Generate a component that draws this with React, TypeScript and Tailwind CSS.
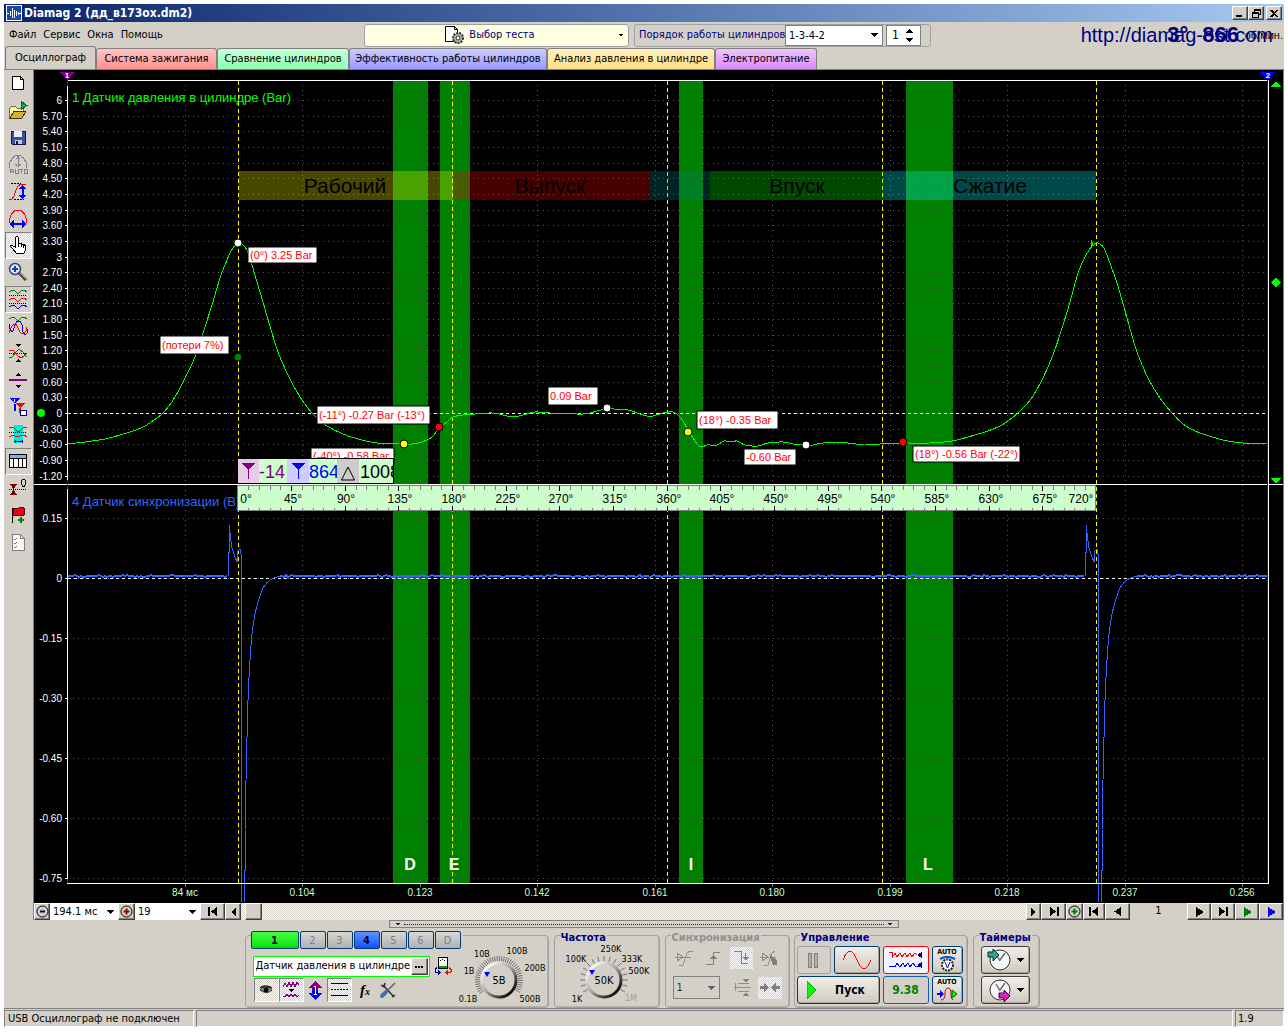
import React from "react";

const ui = "font-['DejaVu_Sans_Condensed','DejaVu_Sans',sans-serif]";
const raised =
  "border border-t-white border-l-white border-r-[#404040] border-b-[#404040] shadow-[inset_-1px_-1px_0_#808080] bg-[#d4d0c8]";
const sunken = "border border-t-[#808080] border-l-[#808080] border-r-white border-b-white";
const dither = "bg-[repeating-conic-gradient(#ffffff_0_25%,#d4d0c8_0_50%)] bg-[length:2px_2px]";

/* ---------- icons ---------- */

function Ico({ children, w = 20, h = 20, smooth = false }: { children: React.ReactNode; w?: number; h?: number; smooth?: boolean }) {
  return (
    <svg width={w} height={h} viewBox={`0 0 ${w} ${h}`} fill="none" shapeRendering={smooth ? "auto" : "crispEdges"} aria-hidden="true" className="shrink-0">
      {children}
    </svg>
  );
}

const wave = (y: number) => `M1 ${y} l2 -1 l2 -1 l2 1 l2 2 l2 0 l3 -3 l2 0 l3 2`;

const toolIcons: { name: string; pressed?: boolean; dither?: boolean; icon: React.ReactNode }[] = [
  {
    name: "Новый",
    icon: (
      <Ico>
        <path d="M4.5 3.5h8l3 3v10h-11z" fill="#fff" stroke="#000" />
        <path d="M12.5 3.5v3h3" stroke="#000" />
      </Ico>
    ),
  },
  {
    name: "Открыть",
    icon: (
      <Ico>
        <path d="M1.5 17.5v-9l2-2h4l2 2h6v2" fill="#fbf3b0" stroke="#806a20" />
        <path d="M2 18l4-7h12l-4 7z" fill="#d6b030" stroke="#403000" />
        <path d="M13 1v9l6-4.500z" fill="#00b050" stroke="#006030" />
      </Ico>
    ),
  },
  {
    name: "Сохранить",
    icon: (
      <Ico>
        <path d="M3 4h14v13H4l-1-1z" fill="#3c50a0" stroke="#101840" />
        <path d="M6 4h8v6H6z" fill="#e8f0ff" />
        <path d="M7 13h7v4H7z" fill="#c0c8d8" />
        <path d="M8 14h2v3H8z" fill="#101840" />
      </Ico>
    ),
  },
  {
    name: "Автомасштаб",
    icon: (
      <Ico>
        <path d="M1.500 14v-5l3-5l3-2.500h5l3 2.500l3 5v5" stroke="#808080" />
        <path d="M10 3v9M7.500 5.500l2.500-3l2.500 3M7.500 10l2.500 3l2.500-3" stroke="#808080" />
        <path d="M2 19v-3l1-1h1l1 1v3M2 17.500h3M7 15v4h3v-4M11 15.500h4M13 15v4M16 15h3v4h-3z" stroke="#808080" />
      </Ico>
    ),
  },
  {
    name: "Масштаб по вертикали",
    icon: (
      <Ico>
        <path d="M3 2.500h10M6 18.500h10" stroke="#000" strokeDasharray="2 1" />
        <path d="M1 18h3l2-3l2-6l2-4l3-2h5" stroke="#f00" />
        <path d="M14.500 5v12" stroke="#00f" strokeWidth="2" />
        <path d="M11 8l3.500-4l3.500 4zM11 14l3.500 4l3.500-4z" fill="#00f" />
      </Ico>
    ),
  },
  {
    name: "Масштаб по горизонтали",
    icon: (
      <Ico>
        <path d="M1.500 15v-4l2-5l4-4h5l4 4l2 5v4" stroke="#f00" />
        <path d="M3 16h14" stroke="#00f" strokeWidth="2" />
        <path d="M6 12v8l-5-4zM14 12v8l5-4z" fill="#00f" />
      </Ico>
    ),
  },
  {
    name: "Рука",
    pressed: true,
    dither: true,
    icon: (
      <Ico>
        <path d="M7.500 12.500v-10l1-1h1l1 1v6l2 0l2 1l2 0l1 2v4l-2 3h-7l-4-5l-2-2v-1h2z" fill="#fff" stroke="#000" />
        <path d="M10.500 8v4M13 9v3M15.500 10v3" stroke="#000" />
      </Ico>
    ),
  },
  {
    name: "Лупа",
    icon: (
      <Ico smooth>
        <path d="M11 11l7 7" stroke="#504030" strokeWidth="3" />
        <path d="M12 11l6 6" stroke="#e0a860" strokeWidth="1" />
        <circle cx="7" cy="7" r="5.500" fill="#d8ecff" stroke="#304878" strokeWidth="1.500" />
        <path d="M7 4v6M4 7h6" stroke="#1840a0" strokeWidth="2" />
      </Ico>
    ),
  },
  {
    name: "Раздельные графики",
    pressed: true,
    icon: (
      <Ico>
        <path d={wave(3)} stroke="#008000" />
        <path d={wave(11)} stroke="#f00" />
        <path d={wave(18)} stroke="#00f" />
        <path d="M1 6.500h18M1 14.500h18" stroke="#000" strokeDasharray="1 1" />
      </Ico>
    ),
  },
  {
    name: "Совмещённые графики",
    icon: (
      <Ico>
        <path d={wave(3)} stroke="#008000" />
        <path d="M1 17q5-15 9-5t8 3l1-4" stroke="#f00" />
        <path d="M1 8l1 5l2 3l1-1l2-6l2-4h3l2 4l1 7l2 3l2-2l1-4" stroke="#00f" />
      </Ico>
    ),
  },
  {
    name: "Наложить",
    icon: (
      <Ico>
        <path d="M1 10.500h18" stroke="#000" strokeDasharray="1 1" />
        <path d="M1 7l4 0l5 6l3 2l3-2l3-3" stroke="#f00" />
        <path d="M1 14l3 0l4-5l3-3l4 3l4 5" stroke="#008000" />
        <path d="M7 1h6l-3 3zM7 19h6l-3-3z" fill="#000" />
      </Ico>
    ),
  },
  {
    name: "Растянуть",
    icon: (
      <Ico>
        <path d="M1 10h18" stroke="#800080" strokeWidth="2" />
        <path d="M7 6h6l-3-3zM7 15h6l-3 3z" fill="#000" />
      </Ico>
    ),
  },
  {
    name: "Маркеры",
    icon: (
      <Ico>
        <path d="M1 1h11l-5 6zM6 7h2v7H6z" fill="#00f" />
        <path d="M8 6h9l-5 5zM11 11h2v5h-2z" fill="#f00" />
        <path d="M6 2v3" stroke="#fff" />
        <path d="M12.500 13.500h6v5h-6z" fill="#fff" stroke="#000080" />
      </Ico>
    ),
  },
  {
    name: "Интервал",
    icon: (
      <Ico>
        <path d="M6 1h9v18H6z" fill="#00e8e8" />
        <path d="M1 4l4-1l4 4l3 0l4-4l3 1" stroke="#008000" />
        <path d="M1 13l4-2l4 2l3-1l4-1l3 2" stroke="#f00" />
        <path d="M1 8.500h18" stroke="#000" strokeDasharray="1 1" />
        <path d="M6 17.500h9M7 16v3M14 16v3" stroke="#000080" />
      </Ico>
    ),
  },
  {
    name: "Таблица",
    pressed: true,
    icon: (
      <Ico>
        <path d="M1.500 3.500h17v13h-17z" fill="#fff" stroke="#000" />
        <path d="M2 4h16v3H2z" fill="#80b0e8" />
        <path d="M2 7.500h16M5.500 7v9M10 7v9M14.500 7v9" stroke="#000" />
      </Ico>
    ),
  },
  {
    name: "Обнулить",
    icon: (
      <Ico>
        <path d="M1 11.500h18" stroke="#000" strokeDasharray="1 1" />
        <path d="M2 6h7l-3.500 5zM2 17h7l-3.500-5z" fill="#800000" />
        <path d="M13.500 3l1-2h2l1 2v3l-1 2h-2l-1-2z" stroke="#000" />
      </Ico>
    ),
  },
  {
    name: "Добавить метку",
    icon: (
      <Ico>
        <path d="M4 3v15" stroke="#000" strokeWidth="1" />
        <path d="M5 3l4 1l4-2l3 1v7l-4 1l-3-1l-4 1z" fill="#f00018" stroke="#600" />
        <path d="M13 12v6M10 15h6" stroke="#008000" strokeWidth="2" />
      </Ico>
    ),
  },
  {
    name: "Отчёт",
    icon: (
      <Ico>
        <path d="M4.500 2.500h8l4 4v12h-12z" fill="#f8f8f8" stroke="#808080" />
        <path d="M6 7l1 1l2-2M6 11l1 1l2-2M6 15l1 1l2-2M12.500 2.500v4h4" stroke="#808080" />
      </Ico>
    ),
  },
];

const nav = {
  first: (
    <Ico w={12} h={9}>
      <path d="M1 0h2v9H1zM10 0v9L4 4.500z" fill="#000" />
    </Ico>
  ),
  last: (
    <Ico w={12} h={9}>
      <path d="M9 0h2v9H9zM2 0v9l6-4.500z" fill="#000" />
    </Ico>
  ),
  left: (
    <Ico w={8} h={9}>
      <path d="M7 0v9L0 4.500z" fill="#000" />
    </Ico>
  ),
};
const play = (c: string) => (
  <Ico w={9} h={10}>
    <path d="M1 0v10l8-5z" fill={c} />
  </Ico>
);
const Down = ({ c = "#000", w = 7 }: { c?: string; w?: number }) => (
  <svg width={w} height="4" viewBox="0 0 8 4" shapeRendering="crispEdges" aria-hidden="true">
    <path d="M0 0h8l-4 4z" fill={c} />
  </svg>
);

/* ---------- oscilloscope chart ---------- */

const pressure =
  "67,444 85,442 105,439 120,435 133,431 145,426 154,420 162,414 169,406 175,397 180,388 185,378 190,368 195,357 203,333 212,305 220,278 225,265 230,253 235,245 238,243 242,244 247,250 252,265 257,282 263,302 269,323 278,352 287,373 297,392 307,407 317,418 327,426 343,434 358,439 377,443 404,444 412,444 422,442 432,437 439,428 447,422 453,417 463,415 475,414 492,413 503,415 512,417 523,415 535,412 550,413 583,414 597,411 607,409 628,410 637,413 647,416 653,416 663,413 673,412 680,417 687,428 693,438 698,445 702,447 707,445 717,445 724,441 732,442 737,441 745,445 758,446 768,443 783,442 793,444 806,445 813,445 823,443 848,443 863,445 880,444 900,443 930,443 952,441 968,437 988,431 1000,426 1008,421 1018,413 1026,405 1033,396 1043,378 1053,355 1062,328 1070,302 1078,273 1085,257 1091,247";
const pressureTail =
  "1093,246 1096,243 1100,244 1104,248 1108,258 1117,283 1127,318 1137,352 1148,378 1160,398 1172,413 1183,424 1191,429 1200,433 1223,440 1243,443 1267,444";

/* Catmull-Rom spline through the sampled points. */
function spline(src: string) {
  const p = src.split(" ").map((s) => s.split(",").map(Number));
  let d = `M${p[0][0]} ${p[0][1]}`;
  for (let i = 0; i < p.length - 1; i++) {
    const a = p[Math.max(0, i - 1)];
    const b = p[i];
    const c = p[i + 1];
    const e = p[Math.min(p.length - 1, i + 2)];
    d += `C${b[0] + (c[0] - a[0]) / 6} ${b[1] + (c[1] - a[1]) / 6} ${c[0] - (e[0] - b[0]) / 6} ${c[1] - (e[1] - b[1]) / 6} ${c[0]} ${c[1]}`;
  }
  return d;
}

function baseline(from: number, to: number) {
  const pts: string[] = [];
  let s = from * 7 + 3;
  for (let x = from; x <= to; x += 2) {
    s = (s * 1103515245 + 12345) % 2147483648;
    const r = s / 2147483648;
    pts.push(`${x},${r > 0.9 ? 575 : r < 0.15 ? 577 : 576}`);
  }
  return pts.join(" ");
}
const pulse = (o: number) =>
  `${o - 10},576 ${o - 10},552 ${o - 9},552 ${o - 9},525 ${o - 8},533 ${o - 6},548 ${o - 3},557 ${o - 1},562 ${o},551 ${o + 2},549 ${o + 3},554 ${o + 3},902`;
const recoveryStem = (o: number) => `${o + 6},902 ${o + 6},870 ${o + 7},870 ${o + 7},830`;
const recoveryCurve = (o: number) =>
  `${o + 7},830 ${o + 8},780 ${o + 10},700 ${o + 12},660 ${o + 14},634 ${o + 17},614 ${o + 21},599 ${o + 25},588 ${o + 32},580 ${o + 42},576`;

const greenBands = [
  [393, 35],
  [440, 30],
  [679, 24],
  [906, 47],
];
const phases: [number, number, string, string, number][] = [
  [239, 214, "#ffff00", "Рабочий", 345],
  [453, 196, "#ff0000", "Выпуск", 550],
  [649, 61, "#008080", "", 0],
  [710, 173, "#00ff00", "Впуск", 797],
  [883, 213, "#00ffff", "Сжатие", 990],
];
const labels: [number, number, number, number, string][] = [
  [248, 247, 69, 16, "(0°) 3.25 Bar"],
  [160, 336, 69, 18, "(потери 7%)"],
  [317, 406, 113, 18, "(-11°) -0.27 Bar (-13°)"],
  [311, 448, 83, 16, "(-40°) -0.58 Bar"],
  [548, 387, 50, 18, "0.09 Bar"],
  [697, 411, 81, 18, "(18°) -0.35 Bar"],
  [744, 449, 52, 16, "-0.60 Bar"],
  [913, 446, 107, 16, "(18°) -0.56 Bar (-22°)"],
];
const dots: [number, number, string][] = [
  [238, 243, "#fff"],
  [238, 357, "#008000"],
  [439, 427, "#f00"],
  [404, 444, "#ff0"],
  [607, 408, "#fff"],
  [688, 432, "#ff0"],
  [806, 445, "#fff"],
  [903, 442, "#f00"],
];
const topRows = Array.from({ length: 25 }, (_, i) => ({ v: (60 - i * 3) / 10, y: Math.round(100 + i * 15.65) }));
const bottomRows = Array.from({ length: 7 }, (_, i) => ({ v: (15 - i * 15) / 100, y: 518 + i * 60 }));
const columns = ["84 мс", "0.104", "0.123", "0.142", "0.161", "0.180", "0.199", "0.218", "0.237", "0.256"].map((t, i) => ({
  t,
  x: Math.floor(185 + i * 117.55),
}));
const yellowLines = [238, 452, 667, 882, 1096];

function Chart() {
  return (
    <svg viewBox="34 70 1249 833" className="block h-auto w-full bg-black font-['Liberation_Sans',Arial,sans-serif]" role="img" aria-label="Осциллограмма">
      <g shapeRendering="crispEdges">
        {greenBands.map(([x, w]) => (
          <rect key={x} x={x} y={81} width={w} height={802} fill="#008000" />
        ))}
        {topRows.concat(bottomRows).map((r) => (
          <line key={r.y} x1={73} x2={1267} y1={r.y + 0.5} y2={r.y + 0.5} stroke="#585858" strokeDasharray="1 4" />
        ))}
        {columns.map((c) => (
          <line key={c.x} x1={c.x + 0.5} x2={c.x + 0.5} y1={85} y2={883} stroke="#585858" strokeDasharray="1 4" />
        ))}
        <path d="M68 413.500H1267M68 578.500H1267" stroke="#fff" strokeDasharray="3 3" />
        {yellowLines.map((x) => (
          <line key={x} x1={x + 0.5} x2={x + 0.5} y1={81} y2={883} stroke="#ff0" strokeDasharray="4 3" />
        ))}
        {phases.map(([x, w, c]) => (
          <rect key={x} x={x} y={171} width={w} height={29} fill={c} opacity={0.28} />
        ))}
        <g fill="none" stroke="#0f0">
          <path d={spline(pressure)} />
          <path d="M1091.500 248V240L1093 246" />
          <path d={spline(pressureTail)} />
        </g>
        <g fill="none" stroke="#3366ff">
          <polyline points={baseline(67, 228)} strokeWidth="2" />
          <polyline points={pulse(238)} />
          <polyline points={recoveryStem(238)} />
          <path d={spline(recoveryCurve(238))} />
          <polyline points={baseline(280, 1085)} strokeWidth="2" />
          <polyline points={pulse(1095)} />
          <polyline points={recoveryStem(1095)} />
          <path d={spline(recoveryCurve(1095))} />
          <polyline points={baseline(1137, 1267)} strokeWidth="2" />
        </g>
        <path d="M67.500 80V883M67 80.500H1268M34 484.500H1283M67 883.500H1268M1268.500 80V884" stroke="#fff" />
        <path d="M1267.500 80V883" stroke="#00f" />
        <path d="M67.500 78V86M67.500 480V489M67.500 878V883" stroke="#800080" />
        {topRows.concat(bottomRows).map((r) => (
          <line key={r.y} x1={65} x2={68} y1={r.y + 0.5} y2={r.y + 0.5} stroke="#fff" />
        ))}
        {columns.map((c) => (
          <line key={c.x} x1={c.x + 0.5} x2={c.x + 0.5} y1={884} y2={887} stroke="#808080" />
        ))}
        <path d="M60 72h15l-7.500 8z" fill="#800080" />
        <path d="M1260 72h15l-7.500 8z" fill="#00f" />
        <path d="M1271 87h10l-5-6zM1271 478h10l-5 6zM1276 277l5 5.500l-5 5.500l-5-5.500z" fill="#0f0" />
      </g>

      <g fill="#fff" fontSize="8" fontWeight="bold" textAnchor="middle">
        <text x={67} y={78}>1</text>
        <text x={1268} y={78}>2</text>
      </g>

      <g fill="#fff" fontSize="10" textAnchor="end">
        {topRows.map((r) => (
          <text key={r.y} x={62} y={r.y + 4}>
            {r.v === 6 || r.v === 3 || r.v === 0 ? r.v : r.v.toFixed(2)}
          </text>
        ))}
        {bottomRows.map((r) => (
          <text key={r.y} x={62} y={r.y + 4}>
            {r.v === 0 ? "0" : r.v.toFixed(2)}
          </text>
        ))}
      </g>
      <g fill="#ccffcc" fontSize="10" textAnchor="middle">
        {columns.map((c) => (
          <text key={c.x} x={c.x} y={896}>{c.t}</text>
        ))}
      </g>

      <text x={72} y={102} fontSize="13" fill="#0f0">1 Датчик давления в цилиндре (Bar)</text>
      <text x={72} y={506} fontSize="13" fill="#3366ff">4 Датчик синхронизации (В)</text>

      <g fontSize="21" textAnchor="middle">
        {phases.map(([x, , , t, cx]) => t && <text key={x} x={cx} y={193}>{t}</text>)}
      </g>

      <g fill="#fff" fontSize="16" fontWeight="bold" textAnchor="middle">
        <text x={410} y={870}>D</text>
        <text x={454} y={870}>E</text>
        <text x={691} y={870}>I</text>
        <text x={928} y={870}>L</text>
      </g>

      {labels.map(([x, y, w, h, t]) => (
        <g key={t}>
          <rect x={x} y={y} width={w} height={h} fill="#fff" stroke="#000" />
          <text x={x + 2} y={y + Math.round(h / 2) + 4} fontSize="11" fill="#f00">{t}</text>
        </g>
      ))}
      {dots.map(([x, y, c]) => (
        <circle key={y + c} cx={x} cy={y} r={4} fill={c} stroke="#000" strokeWidth="1" />
      ))}
      <circle cx={41} cy={413} r={4} fill="#0f0" />

      {/* marker readout */}
      <g shapeRendering="crispEdges">
        <rect x={237} y={458} width={157} height={26} fill="#000" />
        <rect x={238} y={459} width={155} height={24} fill="#ccffcc" />
        <rect x={238} y={459} width={21} height={24} fill="#e6cce6" />
        <rect x={287} y={459} width={22} height={24} fill="#ccccff" />
        <rect x={337} y={459} width={22} height={24} fill="#cccccc" />
        <path d="M241 463h15l-7.500 7zM248 469h1v10h-1z" fill="#800080" />
        <path d="M291 463h15l-7.500 7zM298 469h1v10h-1z" fill="#00f" />
      </g>
      <path d="M348 467l-6.500 13h13z" fill="none" stroke="#000" />
      <clipPath id="readout">
        <path d="M259 459h28v24h-28zM309 459h28v24h-28zM359 459h34v24h-34z" />
      </clipPath>
      <g fontSize="18" clipPath="url(#readout)">
        <text x={259} y={478} fill="#800080">-14</text>
        <text x={309} y={478} fill="#00f">864</text>
        <text x={360} y={478}>1008</text>
      </g>

      {/* crank angle ruler */}
      <g shapeRendering="crispEdges">
        <rect x={237.5} y={485.5} width={858} height={25} fill="#ccffcc" stroke="#808080" />
        {Array.from({ length: 79 }, (_, k) => {
          const i = k + 1;
          const major = i % 5 === 0;
          const x = Math.floor(238 + i * 10.73) + 0.5;
          return <path key={i} d={major ? `M${x} 486v5M${x} 506v5` : `M${x} 486v4M${x} 508v3`} stroke={major ? "#000" : "#808080"} />;
        })}
      </g>
      <g fontSize="12" fill="#000" textAnchor="middle">
        {Array.from({ length: 17 }, (_, i) => (
          <text key={i} x={i === 0 ? 246 : i === 16 ? 1081 : 239 + Math.round(i * 53.7)} y={503}>
            {i * 45}°
          </text>
        ))}
      </g>
    </svg>
  );
}

/* ---------- pieces ---------- */

function Group({ title, off, className, children }: { title?: string; off?: boolean; className: string; children: React.ReactNode }) {
  return (
    <div role="group" aria-label={title} className={`relative h-[73px] shrink-0 rounded-[4px] border border-[#a0a0a0] shadow-[inset_-1px_-1px_0_#b8b4ac] ${className}`}>
      {title && (
        <span className={`absolute -top-[5px] left-[5px] bg-[#d4d0c8] px-px text-[11px] leading-[13px] font-bold ${off ? "text-[#909090]" : "text-[#000080]"}`}>
          {title}
        </span>
      )}
      {children}
    </div>
  );
}

function NavBtn({ label, className, children }: { label: string; className: string; children: React.ReactNode }) {
  return (
    <button type="button" aria-label={label} className={`flex h-[17px] shrink-0 items-center justify-center ${raised} ${className}`}>
      {children}
    </button>
  );
}

function Combo({ label, value, className, text = "text-black", size = "text-[11px]" }: { label: string; value: string; className: string; text?: string; size?: string }) {
  return (
    <span className={`relative flex shrink-0 items-center ${className}`}>
      <select aria-label={label} className={`h-full w-full appearance-none bg-transparent pl-[3px] ${size} leading-none outline-none ${text}`} defaultValue={value}>
        <option>{value}</option>
      </select>
      <span className="pointer-events-none absolute right-1">
        <Down c={text === "text-black" ? "#000" : "#606060"} />
      </span>
    </span>
  );
}

type KnobLabel = [string, number, number, string?];
function Knob({ name, value, labels, w, cx, from, to, step, pointer }: { name: string; value: string; labels: KnobLabel[]; w: number; cx: number; from: number; to: number; step: number; pointer: [number, number] }) {
  const ticks: number[] = [];
  for (let a = from; a <= to; a += step) ticks.push(a);
  const cy = 44;
  return (
    <span className="relative block h-[71px]">
      <svg width={w} height="71" viewBox={`0 0 ${w} 71`} className="block overflow-visible" aria-hidden="true">
        <defs>
          <linearGradient id={`rim-${cx}`} x1="0" y1="0" x2="1" y2="1">
            <stop offset="0.100" stopColor="#ffffff" />
            <stop offset="0.500" stopColor="#a0a0a0" />
            <stop offset="0.900" stopColor="#000000" />
          </linearGradient>
        </defs>
        {ticks.map((a) => {
          const r = (a * Math.PI) / 180;
          const s = Math.sin(r);
          const c = -Math.cos(r);
          return <line key={a} x1={cx + s * 19} y1={cy + c * 19} x2={cx + s * 24} y2={cy + c * 24} stroke="#707070" strokeWidth="1" />;
        })}
        <circle cx={cx} cy={cy} r="17" fill="#d4d0c8" stroke={`url(#rim-${cx})`} strokeWidth="3" />
        <path d={`M${pointer[0]} ${pointer[1]}h6l-3 5z`} fill="#00f" />
        <g className={ui} fontSize="9" textAnchor="middle">
          {labels.map(([t, x, y, c]) => (
            <text key={t} x={x} y={y} fill={c ?? "#000"}>{t}</text>
          ))}
          <text x={cx} y={cy + 4} fontSize="11">{value}</text>
        </g>
      </svg>
      <input type="range" aria-label={name} defaultValue={30} className="absolute inset-0 h-full w-full opacity-0" />
    </span>
  );
}

function ActionBtn({ label, className, children }: { label?: string; className: string; children: React.ReactNode }) {
  return (
    <button type="button" aria-label={label} className={`flex h-[28px] shrink-0 items-center justify-center rounded-[3px] border ${className}`}>
      {children}
    </button>
  );
}

const navy = "border-[#003c74] bg-gradient-to-b from-[#f0eee8] to-[#cfcbc2] shadow-[inset_-1px_-1px_0_#a8a49c]";
const dark = "border-[#404040] bg-gradient-to-b from-[#f0eee8] to-[#cfcbc2] shadow-[inset_-1px_-1px_0_#a8a49c]";

const tabs = [
  { t: "Осциллограф", w: "w-[91px]", c: "bg-[#d4d0c8] h-[23px]" },
  { t: "Система зажигания", w: "w-[121px]", c: "bg-gradient-to-b from-[#ffc4c4] to-[#ff9090] h-[21px]" },
  { t: "Сравнение цилиндров", w: "w-[132px]", c: "bg-gradient-to-b from-[#c4ffd8] to-[#90ffb4] h-[21px]" },
  { t: "Эффективность работы цилиндров", w: "w-[198px]", c: "bg-gradient-to-b from-[#ccccff] to-[#9898ff] h-[21px]" },
  { t: "Анализ давления в цилиндре", w: "w-[168px]", c: "bg-gradient-to-b from-[#fff0c0] to-[#ffdf80] h-[21px]" },
  { t: "Электропитание", w: "w-[102px]", c: "bg-gradient-to-b from-[#f0c4ff] to-[#de88ff] h-[21px]" },
];

const channels = ["2", "3", "4", "5", "6", "D"];

export default function App() {
  return (
    <div className={`bg-white p-1 text-[11px] text-black ${ui}`}>
      <div className="bg-[#d4d0c8]">
        {/* title bar */}
        <header className="flex h-[18px] items-center bg-gradient-to-r from-[#0a246a] to-[#a6caf0] pr-[2px] pl-[2px]">
          <Ico w={16} h={16}>
            <path d="M0 0h16v16H0z" fill="#1848b0" />
            <path d="M.500 .500h15v15H.500z" stroke="#fff" />
            <path d="M1 8.500h2M4.500 6v5M6.500 3v10M8.500 5v8M10.500 6v5M12.500 7v3M13 8.500h2" stroke="#fff" />
          </Ico>
          <h1 className="ml-[2px] flex-1 text-[12px] leading-none font-bold text-white">Diamag 2 (дд_в173ох.dm2)</h1>
          <button type="button" aria-label="Свернуть" className={`flex h-[14px] w-[16px] items-end justify-start pb-[2px] pl-[3px] ${raised}`}>
            <Ico w={6} h={2}><path d="M0 0h6v2H0z" fill="#000" /></Ico>
          </button>
          <button type="button" aria-label="Восстановить" className={`mr-[2px] flex h-[14px] w-[16px] items-center justify-center ${raised}`}>
            <Ico w={9} h={9}>
              <path d="M2.500 3V.500h6v5H7M.500 3.500h6v5h-6zM2 1.500h7M0 4.500h7" stroke="#000" />
            </Ico>
          </button>
          <button type="button" aria-label="Закрыть" className={`flex h-[14px] w-[16px] items-center justify-center ${raised}`}>
            <Ico w={8} h={7}><path d="M0 0h2l2 2l2-2h2L5 3.500L8 7H6L4 5L2 7H0l3-3.500z" fill="#000" /></Ico>
          </button>
        </header>

        {/* menu and toolbar */}
        <div className="flex h-[26px] items-center">
          <nav className="flex w-[360px] shrink-0 gap-[7px] pl-[5px]">
            <button type="button">Файл</button>
            <button type="button">Сервис</button>
            <button type="button">Окна</button>
            <button type="button">Помощь</button>
          </nav>
          <button type="button" className="flex h-[23px] w-[265px] shrink-0 items-center justify-center rounded-[3px] border border-[#a0a0a0] bg-[#ffffe1] text-[#000080]">
            <span className="flex flex-1 items-center justify-center gap-1 pr-[4px]">
              <Ico w={21} h={20} smooth>
                <path d="M1.500 1.500h9l3 3v12h-12z" fill="#fff" stroke="#000" />
                <path d="M10.500 1.500v3h3" stroke="#000" />
                <circle cx="14" cy="13" r="5" fill="#b0b8b0" stroke="#303830" strokeWidth="2" strokeDasharray="2 1" />
                <circle cx="14" cy="13" r="2" fill="#fff" stroke="#303830" />
              </Ico>
              Выбор теста
            </span>
            <span className="mr-1"><Down w={6} /></span>
          </button>
          <div className="ml-[5px] flex h-[23px] w-[297px] shrink-0 items-center rounded-[3px] border border-[#a0a0a0] pl-1">
            <span className="w-[146px] whitespace-nowrap text-[#000080]">Порядок работы цилиндров</span>
            <Combo label="Порядок работы цилиндров" value="1-3-4-2" className="h-[21px] w-[98px] border border-[#808080] bg-white" />
            <span className="ml-[3px] flex h-[21px] w-[35px] items-center border border-[#808080] bg-white">
              <input aria-label="Номер цилиндра" defaultValue="1" className="w-[18px] pl-[5px] text-[12px] outline-none" />
              <Ico w={9} h={13}><path d="M1 4h7L4.500 0zM1 9h7l-3.500 4z" fill="#000" /></Ico>
            </span>
          </div>
          <div className="relative ml-auto flex h-full items-center pr-[11px] font-['Liberation_Sans',Arial,sans-serif] text-[#000080]">
            <a href="http://diamag-est.com" className="text-[20px] leading-none">http://diamag-est.com</a>
            <span className="absolute right-[45px] flex gap-[14px] text-[22px] leading-none font-bold">
              <span>3°</span>
              <span>866</span>
            </span>
            <span className="absolute right-px text-[11px] text-black">об/мин.</span>
          </div>
        </div>

        {/* tabs */}
        <div role="tablist" className="flex h-[22px] items-end border-b border-[#808080] pl-px">
          {tabs.map((tab, i) => (
            <button
              key={tab.t}
              role="tab"
              type="button"
              aria-selected={i === 0}
              className={`shrink-0 rounded-t-[3px] border border-b-0 border-[#808080] whitespace-nowrap ${tab.w} ${tab.c}`}
            >
              {tab.t}
            </button>
          ))}
        </div>

        <div className="flex">
          {/* tool column */}
          <aside className="flex w-[30px] shrink-0 flex-col border-r border-[#808080] pr-px pl-px">
            {toolIcons.map((t) => (
              <button
                key={t.name}
                type="button"
                aria-label={t.name}
                className={`flex h-[27px] w-[27px] items-center justify-center pr-px pb-[2px] ${t.pressed ? sunken : ""} ${t.dither ? dither : ""}`}
              >
                {t.icon}
              </button>
            ))}
          </aside>
          <main className="min-w-0 flex-1 border-r border-[#808080]">
            <Chart />
            {/* time scroll row */}
            <div className="flex h-[17px] items-center">
              <NavBtn label="Уменьшить" className="w-[16px]">
                <Ico w={13} h={13} smooth>
                  <circle cx="6.500" cy="6.500" r="5.500" stroke="#000" />
                  <path d="M4 6.500h5" stroke="#000080" strokeWidth="2" />
                </Ico>
              </NavBtn>
              <Combo label="Длительность" value="194.1 мс" className="h-[17px] w-[68px] bg-white" />
              <NavBtn label="Увеличить" className="w-[17px]">
                <Ico w={13} h={13} smooth>
                  <circle cx="6.500" cy="6.500" r="5.500" stroke="#000" />
                  <path d="M3.500 6.500h6M6.500 3.500v6" stroke="#a00000" strokeWidth="2" />
                </Ico>
              </NavBtn>
              <Combo label="Кадр" value="19" className="h-[17px] w-[65px] bg-white" />
              <NavBtn label="В начало" className="w-[25px]">{nav.first}</NavBtn>
              <NavBtn label="Назад" className="w-[16px]"><Ico w={5} h={8}><path d="M5 0v8L0 4z" fill="#000" /></Ico></NavBtn>
              <div className={`h-[17px] min-w-0 flex-1 pl-[4px] ${dither}`}>
                <NavBtn label="Ползунок" className="w-[17px]">{null}</NavBtn>
              </div>
              <NavBtn label="Вперёд" className="w-[15px]"><Ico w={5} h={8}><path d="M0 0v8l5-4z" fill="#000" /></Ico></NavBtn>
              <NavBtn label="В конец" className="w-[25px]">{nav.last}</NavBtn>
              <NavBtn label="Добавить" className="w-[17px]">
                <Ico w={13} h={13} smooth>
                  <circle cx="6.500" cy="6.500" r="5.500" stroke="#000" />
                  <path d="M3.500 6.500h6M6.500 3.500v6" stroke="#008000" strokeWidth="2" />
                </Ico>
              </NavBtn>
              <NavBtn label="Первый кадр" className="w-[22px]">{nav.first}</NavBtn>
              <NavBtn label="Предыдущий кадр" className="w-[25px]">{nav.left}</NavBtn>
              <span className="w-[57px] shrink-0 text-center">1</span>
              <NavBtn label="Следующий кадр" className="w-[24px]">{play("#000")}</NavBtn>
              <NavBtn label="Последний кадр" className="w-[24px]">{nav.last}</NavBtn>
              <NavBtn label="Воспроизвести" className="w-[24px]">{play("#008000")}</NavBtn>
              <NavBtn label="Воспроизвести всё" className="w-[24px]">{play("#0000ff")}</NavBtn>
            </div>
          </main>
        </div>

        {/* splitter */}
        <div className="mx-auto flex h-[8px] w-[510px] items-center gap-[3px] border border-[#808080] px-[5px]">
          <Down c="#0a246a" w={6} />
          <span className="flex-1 border-t border-dotted border-[#0a246a]" />
          <Down c="#0a246a" w={6} />
        </div>

        {/* control panel */}
        <div className="flex justify-center gap-[5px] pt-[7px] pr-[4px]">
          <Group className="flex w-[304px]">
            <div className="-mt-[5px] w-[211px] shrink-0 pl-[5px]">
              <div className="flex w-[212px] gap-px bg-[#d4d0c8]">
                <button type="button" className="h-[18px] w-[48px] shrink-0 rounded-[2px] border border-[#003c74] bg-gradient-to-b from-[#40ff40] to-[#00e000] text-[11px] leading-none font-bold">
                  1
                </button>
                {channels.map((c) => (
                  <button
                    key={c}
                    type="button"
                    className={`h-[18px] w-[26px] shrink-0 rounded-[2px] border border-[#003c74] leading-none ${
                      c === "4" ? "bg-gradient-to-b from-[#6090ff] to-[#1050ff] font-bold text-[#000040]" : "bg-gradient-to-b from-[#d8d8d8] to-[#b0b0b0] text-[#808080]"
                    }`}
                  >
                    {c}
                  </button>
                ))}
              </div>
              <div className="mt-[7px] ml-[2px] flex items-center gap-[4px]">
                <span className="flex h-[21px] w-[177px] shrink-0 items-center border border-[#00ff00] bg-white">
                  <input aria-label="Название канала" defaultValue="Датчик давления в цилиндре" className="min-w-0 flex-1 pl-[2px] outline-none" />
                  <button type="button" aria-label="Выбрать датчик" className={`mr-px flex h-[17px] w-[17px] shrink-0 items-center justify-center ${raised}`}>
                    <Ico w={8} h={2}><path d="M0 0h2v2H0zM3 0h2v2H3zM6 0h2v2H6z" fill="#000" /></Ico>
                  </button>
                </span>
                <button type="button" aria-label="Инвертировать">
                  <Ico w={18} h={19}>
                    <path d="M4.500 .500h9v11h-9z" fill="#fff" stroke="#000" />
                    <path d="M6 3h1M8 2h1M10 3h1" stroke="#000" />
                    <path d="M5 9h8v2H5z" fill="#00a000" />
                    <path d="M3 10.500l-2 2v2l1 1h3" stroke="#000080" />
                    <path d="M4 12v7l3-3.500z" fill="#000080" />
                    <path d="M15 10.500l2 2v2l-1 1h-3" stroke="#f00" />
                    <path d="M14 12v7l-3-3.500z" fill="#f00" />
                  </Ico>
                </button>
              </div>
              <div className="mt-px ml-[3px] flex items-center">
                <button type="button" aria-label="Видимость" className={`flex h-[24px] w-[25px] items-center justify-center ${sunken} ${dither}`}>
                  <Ico w={14} h={10} smooth>
                    <path d="M1 5q5-6 12 0q-5 5-12 0z" fill="#a0a0a0" stroke="#303030" />
                    <circle cx="7" cy="5" r="2.500" fill="#000" />
                    <path d="M1 3q5-4 12 0" stroke="#202020" strokeWidth="1.500" />
                  </Ico>
                </button>
                <button type="button" aria-label="Фильтр" className={`flex h-[24px] w-[25px] items-center justify-center ${sunken} ${dither}`}>
                  <Ico w={17} h={18}>
                    <path d="M0 6l2-4l2 4l2-5l2 5l2-5l2 5l2-5l2 3M0 15l2 1l2-3l2 3l2-3l2 3l2-3l2 3l2-2" stroke="#800080" />
                    <path d="M6 8h5l-2.500 3z" fill="#000" />
                  </Ico>
                </button>
                <button type="button" aria-label="Смещение" className="flex w-[23px] items-center justify-center">
                  <Ico w={14} h={19}>
                    <path d="M7 0l7 7H10v3H4V7H0z" fill="#800080" />
                    <path d="M7 19l7-7H10V9H4v3H0z" fill="#00f" />
                    <path d="M7.500 5v8M6 13.500h3M6 5.500h2" stroke="#fff" />
                  </Ico>
                </button>
                <button type="button" aria-label="Уровни" className={`flex h-[24px] w-[25px] items-center justify-center ${sunken} ${dither}`}>
                  <Ico w={17} h={14}>
                    <path d="M0 .500h17M0 12.500h17" stroke="#000" />
                    <path d="M0 6.500h17" stroke="#000" strokeDasharray="2 1" />
                  </Ico>
                </button>
                <button type="button" aria-label="Формула" className="w-[27px] font-['Liberation_Serif',serif] text-[15px] leading-none font-bold italic">
                  f<span className="text-[10px]">x</span>
                </button>
                <button type="button" aria-label="Настройки" className="ml-px">
                  <Ico w={16} h={16} smooth>
                    <path d="M3 3l11 12" stroke="#303030" strokeWidth="1.500" />
                    <path d="M1 3l3 2l1-4M12 15l3-2" stroke="#303030" strokeWidth="1.500" />
                    <path d="M15 1L7 9" stroke="#606060" strokeWidth="1.500" />
                    <path d="M6 10l-4 4" stroke="#4870b0" strokeWidth="4" strokeLinecap="round" />
                  </Ico>
                </button>
              </div>
            </div>
            <Knob
              name="Диапазон"
              value="5В"
              w={90}
              cx={42}
              from={-125}
              to={125}
              step={6}
              pointer={[27, 36]}
              labels={[
                ["10В", 25, 21],
                ["100В", 60, 18],
                ["1В", 12, 38],
                ["200В", 78, 35],
                ["0.1В", 11, 66],
                ["500В", 73, 66],
              ]}
            />
          </Group>

          <Group title="Частота" className="w-[106px]">
            <Knob
              name="Частота"
              value="50K"
              w={104}
              cx={49}
              from={-120}
              to={120}
              step={15}
              pointer={[34, 34]}
              labels={[
                ["250K", 56, 16],
                ["100K", 21, 26],
                ["333K", 77, 26],
                ["500K", 84, 38],
                ["1K", 22, 66],
                ["1M", 76, 65, "#a0a0a0"],
              ]}
            />
          </Group>

          <Group title="Синхронизация" off className="w-[125px] px-[7px] pt-[11px]">
            <div className="flex items-center gap-[5px]">
              <button type="button" aria-label="Синхронизация вручную" className="flex h-[22px] w-[24px] items-center justify-center">
                <Ico w={18} h={18}><path d="M2 4v8l6-4zM4 16h4l4-12l3-2h3M0 8.500h16" stroke="#909090" /></Ico>
              </button>
              <button type="button" aria-label="По фронту" className="flex h-[22px] w-[24px] items-center justify-center">
                <Ico w={16} h={16}>
                  <path d="M1 14.500h7v-12h7" stroke="#808080" />
                  <path d="M5 9h7l-3.500-4z" fill="#808080" />
                </Ico>
              </button>
              <button type="button" aria-label="По спаду" className={`flex h-[22px] w-[24px] items-center justify-center ${dither}`}>
                <Ico w={16} h={16}>
                  <path d="M1 1.500h7v12h7M12.500 3v5" stroke="#808080" />
                  <path d="M10 7h6l-3 4z" fill="#808080" />
                </Ico>
              </button>
              <button type="button" aria-label="Авто синхронизация" className="flex h-[22px] w-[24px] items-center justify-center">
                <Ico w={20} h={18}>
                  <path d="M2 4v8l6-4zM4 16h4l4-12l3-2M0 8.500h16" stroke="#909090" />
                  <path d="M9 5l8 6v5h-4z" fill="#808080" />
                </Ico>
              </button>
            </div>
            <div className="mt-[7px] flex items-center">
              <Combo label="Канал синхронизации" value="1" text="text-[#303030]" className="h-[23px] w-[47px] border border-[#808080]" />
              <button type="button" aria-label="Границы" className="ml-[13px] flex h-[22px] w-[20px] items-center justify-center">
                <Ico w={17} h={17}>
                  <path d="M0 8.500h17M1 4v8M4 4.500h11M4 12.500h11" stroke="#909090" />
                  <path d="M9 0h6l-3 4zM9 17h6l-3-4z" fill="#808080" />
                </Ico>
              </button>
              <button type="button" aria-label="Сжать" className={`ml-[5px] flex h-[22px] w-[24px] items-center justify-center ${dither}`}>
                <Ico w={20} h={11}><path d="M0 4h4V1l5 4.500L4 10V7H0zM20 4h-4V1l-5 4.500L16 10V7h4z" fill="#808080" /></Ico>
              </button>
            </div>
          </Group>

          <Group title="Управление" className="-ml-px flex w-[174px] flex-col gap-[2px] pt-[10px] pl-[2px]">
            <div className="flex gap-[3px]">
              <ActionBtn label="Пауза" className="w-[34px] border-[#a0a0a0]">
                <Ico w={11} h={15}><path d="M.500 .500h3v14h-3zM6.500 .500h3v14h-3z" fill="#b0b0b0" stroke="#808080" /></Ico>
              </ActionBtn>
              <ActionBtn label="Осциллограф" className={`w-[46px] ${navy}`}>
                <Ico w={30} h={20}><path d="M1 10q7-18 14 0t14 0" stroke="#f00" /></Ico>
              </ActionBtn>
              <ActionBtn label="Непрерывная запись" className="w-[46px] border-[#ff0000] bg-[#f4f4ff]">
                <Ico w={34} h={20}>
                  <path d="M0 2h3v6l3-5l2 4l3-4l2 4l3-4l2 4l3-4l2 4l3-4l2 2" stroke="#f00" />
                  <path d="M0 16h4l2 1l2-4l3 4l3-4l2 4l3-4l2 4l3-4l2 3h4" stroke="#00f" />
                  <path d="M33 2v6l-5-3zM33 12v6l-5-3z" fill="#000080" />
                </Ico>
              </ActionBtn>
              <ActionBtn label="Авто диапазон" className={`w-[31px] flex-col ${navy}`}>
                <span className="text-[7px] leading-[7px] font-bold">AUTO</span>
                <Ico w={19} h={16} smooth>
                  <path d="M2 3q7-4 15 0" stroke="#0050d0" strokeWidth="2" />
                  <circle cx="9.500" cy="9" r="5.500" fill="#fff" stroke="#202020" strokeWidth="2" strokeDasharray="2 1" />
                  <path d="M7 6l2.500 6L12 6" stroke="#00f" />
                </Ico>
              </ActionBtn>
            </div>
            <div className="flex gap-[3px]">
              <ActionBtn className={`w-[83px] gap-[18px] ${navy}`}>
                <Ico w={10} h={18} smooth><path d="M0 0v18l9-9z" fill="#0f0" stroke="#00a000" /></Ico>
                <span className="mr-1 text-[12px] font-bold">Пуск</span>
              </ActionBtn>
              <output className="flex h-[28px] w-[46px] items-center justify-center rounded-[3px] border border-[#1060b0] text-[12px] font-bold text-[#008000]">9.38</output>
              <ActionBtn label="Авто запуск" className={`w-[31px] flex-col ${navy}`}>
                <span className="text-[7px] leading-[7px] font-bold">AUTO</span>
                <Ico w={21} h={15} smooth>
                  <path d="M0 7h3V4l4 4l-4 4V9H0z" fill="#00f" />
                  <path d="M4 14q4 0 4-6t3-6t3 6t2 6" stroke="#c00000" />
                  <path d="M15 4v8l5-4z" fill="#0f0" stroke="#006000" />
                </Ico>
              </ActionBtn>
            </div>
          </Group>

          <Group title="Таймеры" className="flex w-[67px] flex-col gap-[2px] pt-[10px] pl-[7px]">
            {["#30a090", "#e020c0"].map((c, i) => (
              <ActionBtn key={c} label={i ? "Таймер остановки" : "Таймер запуска"} className={`w-[49px] gap-[6px] ${dark}`}>
                <Ico w={24} h={24} smooth>
                  <circle cx="13" cy="12" r="10" fill="#f8f8f8" stroke="#303030" />
                  <path d="M13 12l5-7M13 13L9 6" stroke="#707070" strokeWidth="1.500" />
                  {i ? (
                    <path d="M12 15h5v-3l6 6l-6 6v-4h-5z" fill={c} stroke="#400040" />
                  ) : (
                    <path d="M1 4h5V1l6 6l-6 6V9H1z" fill={c} stroke="#003028" />
                  )}
                </Ico>
                <Down w={7} />
              </ActionBtn>
            ))}
          </Group>
        </div>

        {/* status bar */}
        <footer className="flex gap-[2px] border-t border-[#808080] pt-px">
          <span className={`h-[17px] w-[190px] shrink-0 pl-[3px] leading-[15px] ${sunken}`}>USB Осциллограф не подключен</span>
          <span className={`h-[17px] min-w-0 flex-1 ${sunken}`} />
          <span className={`h-[17px] w-[49px] shrink-0 pl-[2px] leading-[15px] ${sunken}`}>1.9</span>
        </footer>
      </div>
    </div>
  );
}
